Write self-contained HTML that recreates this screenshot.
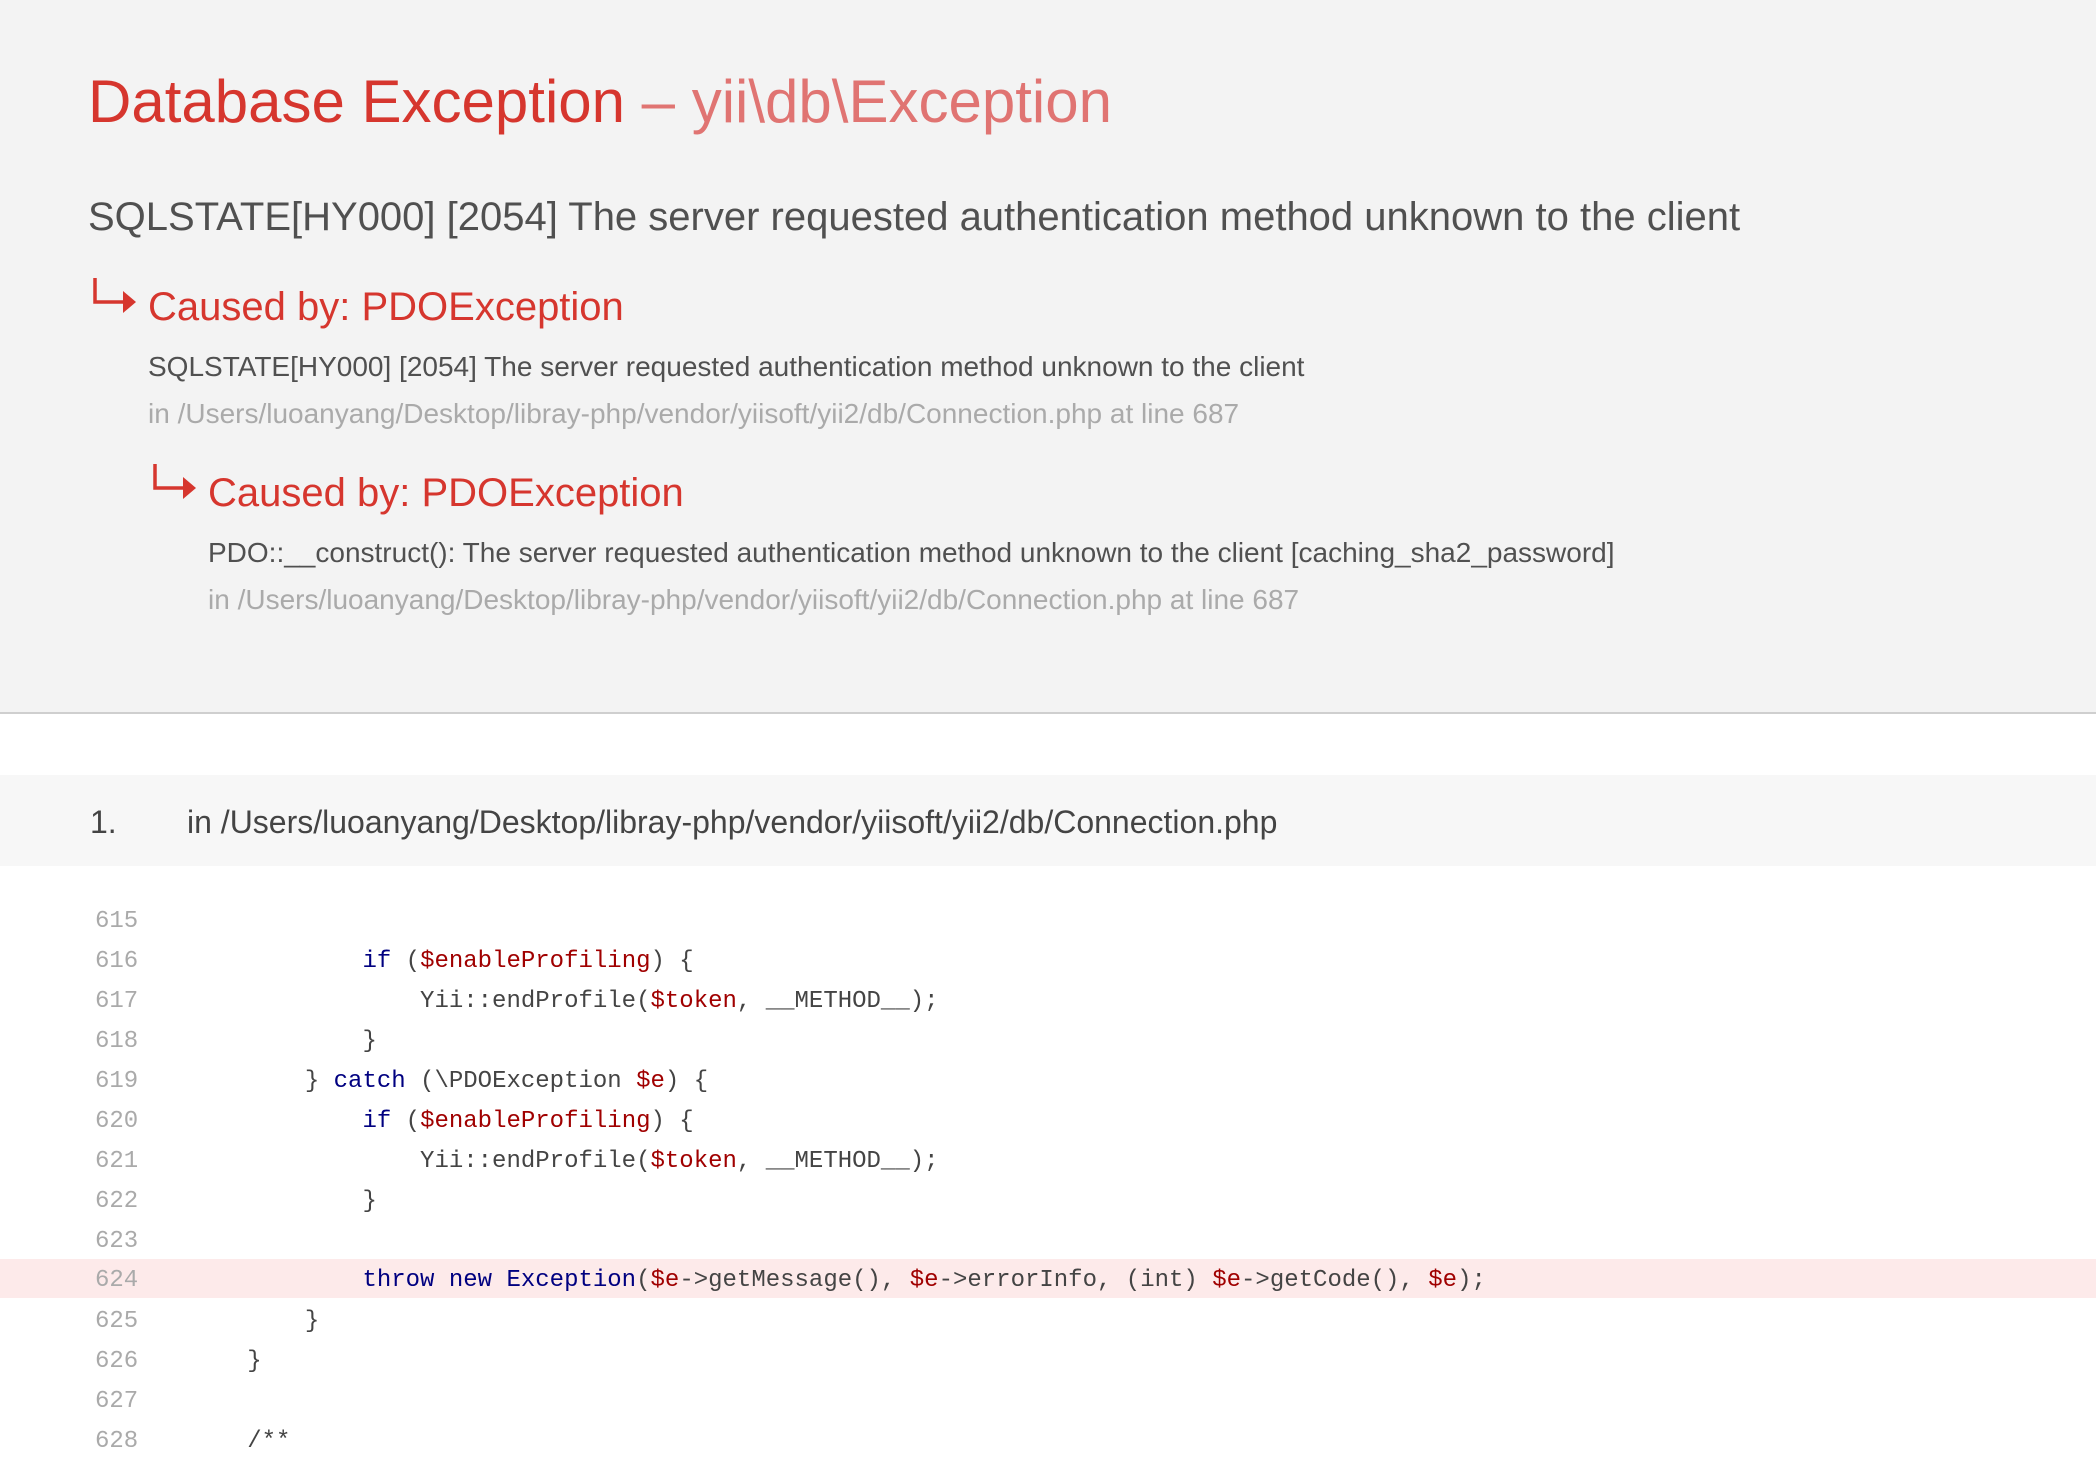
<!DOCTYPE html>
<html><head><meta charset="utf-8">
<style>
*{margin:0;padding:0;box-sizing:border-box}
body{width:2096px;height:1448px;overflow:hidden;background:#fff;font-family:"Liberation Sans",Arial,sans-serif;position:relative}
.hdr{position:absolute;left:0;top:0;width:2096px;height:714px;background:#f3f3f3;border-bottom:2px solid #cfcfcf}
.t{position:absolute;white-space:nowrap;line-height:1}
.red{color:#d6362e}
.lred{color:#e07472}
.msg{color:#505050}
.path{color:#aaa}
.row{position:absolute;left:0;top:775px;width:2096px;height:91px;background:#f7f7f7}
.code{position:absolute;left:0;width:2096px;height:40px;font-family:"Liberation Mono",monospace;font-size:24px;line-height:40px;white-space:pre;color:#444}
.code .n{position:absolute;left:95px;color:#aaa}
.code .c{position:absolute;left:132px}
.k{color:#000080}.v{color:#a00000}
.hl{background:#fdeaea}
</style></head><body>
<div class="hdr"></div>
<div class="t" style="left:88px;top:72px;font-size:60px"><span class="red">Database Exception</span><span class="lred"> – yii\db\Exception</span></div>
<div class="t msg" style="left:88px;top:197px;font-size:40px">SQLSTATE[HY000] [2054] The server requested authentication method unknown to the client</div>

<svg style="position:absolute;left:88px;top:275px" width="54" height="42"><path d="M7 3V27H39" stroke="#d6362e" stroke-width="3.5" fill="none"/><path d="M35 16L48 27L35 38Z" fill="#d6362e"/></svg>
<div class="t red" style="left:148px;top:287px;font-size:40px">Caused by: PDOException</div>
<div class="t msg" style="left:148px;top:353px;font-size:28px">SQLSTATE[HY000] [2054] The server requested authentication method unknown to the client</div>
<div class="t path" style="left:148px;top:400px;font-size:28px">in /Users/luoanyang/Desktop/libray-php/vendor/yiisoft/yii2/db/Connection.php at line 687</div>

<svg style="position:absolute;left:148px;top:461px" width="54" height="42"><path d="M7 3V27H39" stroke="#d6362e" stroke-width="3.5" fill="none"/><path d="M35 16L48 27L35 38Z" fill="#d6362e"/></svg>
<div class="t red" style="left:208px;top:473px;font-size:40px">Caused by: PDOException</div>
<div class="t msg" style="left:208px;top:539px;font-size:28px">PDO::__construct(): The server requested authentication method unknown to the client [caching_sha2_password]</div>
<div class="t path" style="left:208px;top:586px;font-size:28px">in /Users/luoanyang/Desktop/libray-php/vendor/yiisoft/yii2/db/Connection.php at line 687</div>

<div class="row"></div>
<div class="t msg" style="left:90px;top:806px;font-size:32px;color:#444">1.</div>
<div class="t msg" style="left:187px;top:806px;font-size:32px;color:#444">in /Users/luoanyang/Desktop/libray-php/vendor/yiisoft/yii2/db/Connection.php</div>

<div class="code" style="top:902px"><span class="n">615</span><span class="c"></span></div>
<div class="code" style="top:942px"><span class="n">616</span><span class="c">                <span class="k">if</span> (<span class="v">$enableProfiling</span>) {</span></div>
<div class="code" style="top:982px"><span class="n">617</span><span class="c">                    Yii::endProfile(<span class="v">$token</span>, __METHOD__);</span></div>
<div class="code" style="top:1022px"><span class="n">618</span><span class="c">                }</span></div>
<div class="code" style="top:1062px"><span class="n">619</span><span class="c">            } <span class="k">catch</span> (\PDOException <span class="v">$e</span>) {</span></div>
<div class="code" style="top:1102px"><span class="n">620</span><span class="c">                <span class="k">if</span> (<span class="v">$enableProfiling</span>) {</span></div>
<div class="code" style="top:1142px"><span class="n">621</span><span class="c">                    Yii::endProfile(<span class="v">$token</span>, __METHOD__);</span></div>
<div class="code" style="top:1182px"><span class="n">622</span><span class="c">                }</span></div>
<div class="code" style="top:1222px"><span class="n">623</span><span class="c"></span></div>
<div class="code hl" style="top:1259px;height:39px;line-height:43px"><span class="n">624</span><span class="c">                <span class="k">throw new Exception</span>(<span class="v">$e</span>-&gt;getMessage(), <span class="v">$e</span>-&gt;errorInfo, (int) <span class="v">$e</span>-&gt;getCode(), <span class="v">$e</span>);</span></div>
<div class="code" style="top:1302px"><span class="n">625</span><span class="c">            }</span></div>
<div class="code" style="top:1342px"><span class="n">626</span><span class="c">        }</span></div>
<div class="code" style="top:1382px"><span class="n">627</span><span class="c"></span></div>
<div class="code" style="top:1422px"><span class="n">628</span><span class="c">        /**</span></div>
</body></html>
